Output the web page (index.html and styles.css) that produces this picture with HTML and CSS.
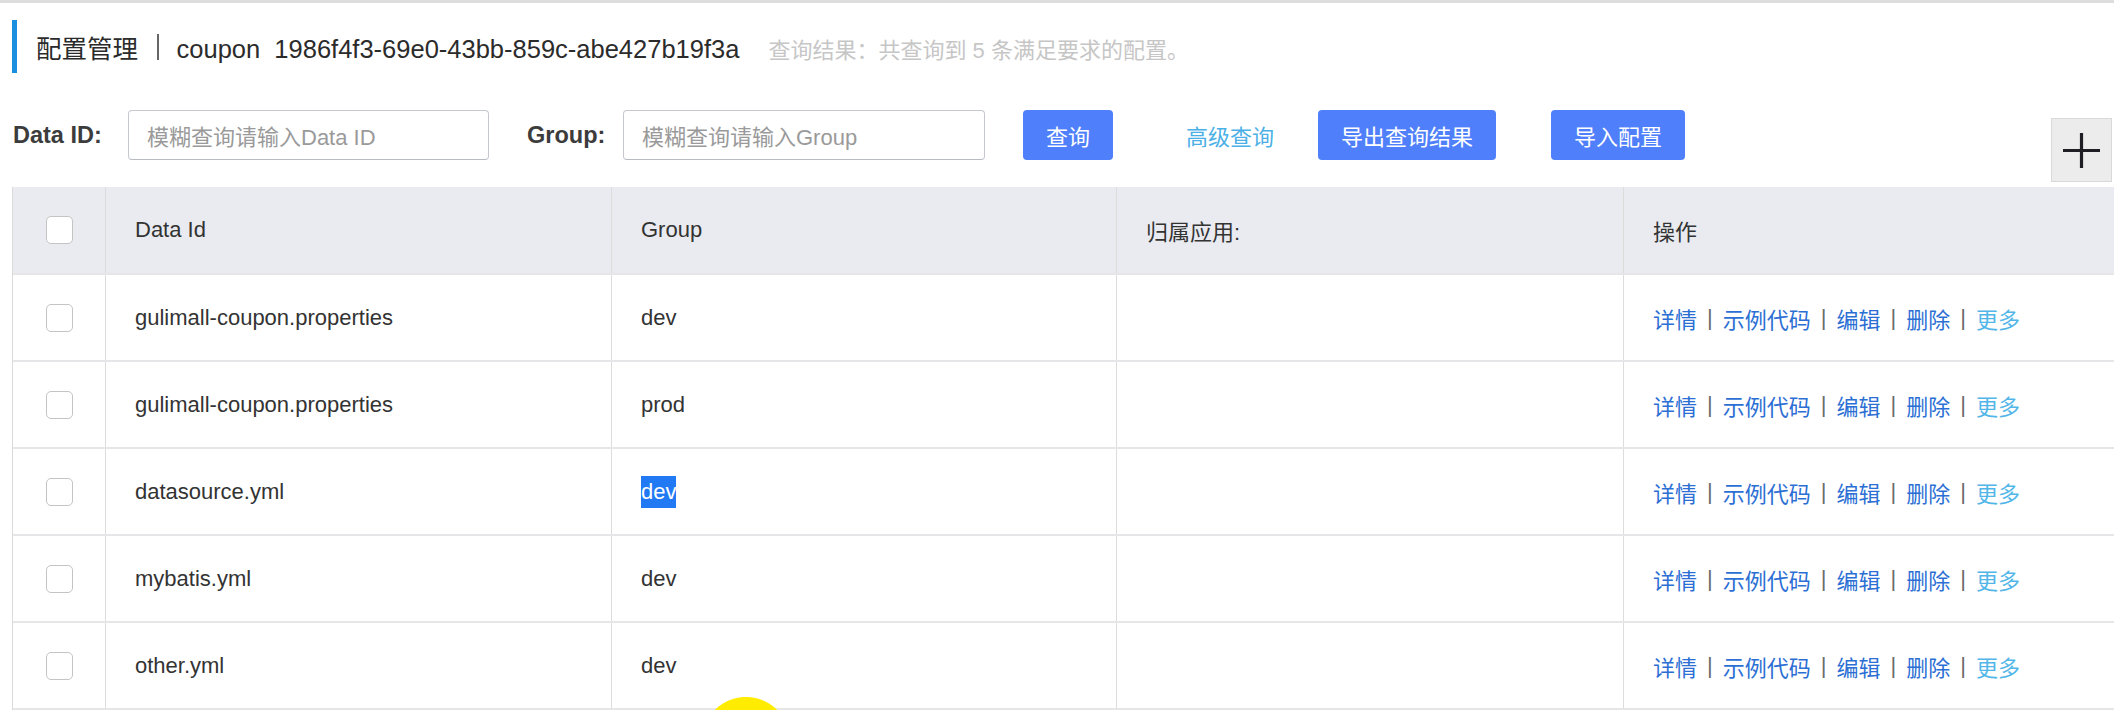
FILE: index.html
```html
<!DOCTYPE html>
<html lang="zh-CN">
<head>
<meta charset="utf-8">
<title>配置管理</title>
<link rel="stylesheet" href="styles.css">
</head>
<body>
<div class="topline"></div>
<div class="page">
  <div class="title">
    <div class="title-text">
      <span class="t-main">配置管理</span>
      <span class="t-pipe"></span>
      <span class="t-ns">coupon&nbsp; 1986f4f3-69e0-43bb-859c-abe427b19f3a</span>
      <span class="t-result">查询结果：共查询到 5 条满足要求的配置。</span>
    </div>
  </div>

  <div class="filter">
    <label class="lbl lbl-id">Data ID:</label>
    <div class="inp"><span class="ph">模糊查询请输入Data ID</span></div>
    <label class="lbl lbl-group">Group:</label>
    <div class="inp inp-group"><span class="ph">模糊查询请输入Group</span></div>
    <button class="btn btn-query">查询</button>
    <a class="adv">高级查询</a>
    <button class="btn btn-export">导出查询结果</button>
    <button class="btn btn-import">导入配置</button>
    <button class="plus" aria-label="add">
      <svg width="39" height="37" viewBox="0 0 39 37"><path d="M1 18.5H38M19.5 1V36" stroke="#1e1e24" stroke-width="3.2" fill="none"/></svg>
    </button>
  </div>

  <div class="table">
    <div class="row head">
      <div class="cell chk"><span class="box"></span></div>
      <div class="cell">Data Id</div>
      <div class="cell">Group</div>
      <div class="cell">归属应用:</div>
      <div class="cell">操作</div>
    </div>
    <div class="row">
      <div class="cell chk"><span class="box"></span></div>
      <div class="cell">gulimall-coupon.properties</div>
      <div class="cell">dev</div>
      <div class="cell"></div>
      <div class="cell ops"><a class="op">详情</a><span class="sep">|</span><a class="op">示例代码</a><span class="sep">|</span><a class="op">编辑</a><span class="sep">|</span><a class="op">删除</a><span class="sep">|</span><a class="op more">更多</a></div>
    </div>
    <div class="row">
      <div class="cell chk"><span class="box"></span></div>
      <div class="cell">gulimall-coupon.properties</div>
      <div class="cell">prod</div>
      <div class="cell"></div>
      <div class="cell ops"><a class="op">详情</a><span class="sep">|</span><a class="op">示例代码</a><span class="sep">|</span><a class="op">编辑</a><span class="sep">|</span><a class="op">删除</a><span class="sep">|</span><a class="op more">更多</a></div>
    </div>
    <div class="row">
      <div class="cell chk"><span class="box"></span></div>
      <div class="cell">datasource.yml</div>
      <div class="cell"><span class="sel">dev</span></div>
      <div class="cell"></div>
      <div class="cell ops"><a class="op">详情</a><span class="sep">|</span><a class="op">示例代码</a><span class="sep">|</span><a class="op">编辑</a><span class="sep">|</span><a class="op">删除</a><span class="sep">|</span><a class="op more">更多</a></div>
    </div>
    <div class="row">
      <div class="cell chk"><span class="box"></span></div>
      <div class="cell">mybatis.yml</div>
      <div class="cell">dev</div>
      <div class="cell"></div>
      <div class="cell ops"><a class="op">详情</a><span class="sep">|</span><a class="op">示例代码</a><span class="sep">|</span><a class="op">编辑</a><span class="sep">|</span><a class="op">删除</a><span class="sep">|</span><a class="op more">更多</a></div>
    </div>
    <div class="row">
      <div class="cell chk"><span class="box"></span></div>
      <div class="cell">other.yml</div>
      <div class="cell">dev</div>
      <div class="cell"></div>
      <div class="cell ops"><a class="op">详情</a><span class="sep">|</span><a class="op">示例代码</a><span class="sep">|</span><a class="op">编辑</a><span class="sep">|</span><a class="op">删除</a><span class="sep">|</span><a class="op more">更多</a></div>
    </div>
  </div>
</div>
<div class="cursor-dot"></div>
</body>
</html>
```

FILE: styles.css
```css
html, body {
  margin: 0;
  padding: 0;
}
html {
  height: 710px;
  overflow: hidden;
}
body {
  width: 2114px;
  height: 710px;
  overflow: hidden;
  position: relative;
  background: #ffffff;
  font-family: "Liberation Sans", Arial, "Noto Sans CJK SC", sans-serif;
  font-size: 22px;
  color: #333333;
}
.topline {
  height: 3px;
  background: #dedede;
}
.page {
  padding-left: 12px;
}
.title {
  margin-top: 17px;
  height: 53px;
  border-left: 5px solid #1b8fdf;
  padding-left: 19px;
  display: flex;
  align-items: center;
}
.title-text {
  display: flex;
  align-items: baseline;
}
.t-main {
  font-size: 25.5px;
  color: #2b2b2b;
}
.t-pipe {
  display: inline-block;
  width: 1.5px;
  height: 26px;
  background: #666666;
  margin: 0 18px 0 19px;
  align-self: center;
}
.t-ns {
  font-size: 25.5px;
  color: #2b2b2b;
}
.t-result {
  font-size: 22px;
  color: #c6c6c6;
  margin-left: 29px;
}

.filter {
  margin-top: 37px;
  height: 50px;
  display: flex;
  align-items: center;
  padding-left: 1px;
  padding-right: 2px;
}
.lbl {
  font-weight: bold;
  font-size: 23.5px;
  color: #3c3c3c;
}
.lbl-id { width: 115px; }
.lbl-group { width: 96px; }
.inp {
  box-sizing: border-box;
  width: 361px;
  height: 50px;
  border: 1px solid #c6c8cf;
  border-bottom-color: #b9bbc2;
  border-radius: 4px;
  display: flex;
  align-items: center;
  padding-left: 18px;
  margin-right: 38px;
}
.inp-group { width: 362px; }
.ph {
  color: #9a9a9a;
  font-size: 22px;
}
.btn {
  box-sizing: border-box;
  height: 50px;
  border: none;
  border-radius: 4px;
  background: #4f7ffa;
  color: #ffffff;
  font-family: inherit;
  font-size: 22px;
  padding: 0 23px;
}
.btn-query { width: 90px; padding: 0; margin-right: 73px; }
.adv {
  color: #4cb0e6;
  font-size: 22px;
  margin-right: 44px;
}
.btn-export { width: 178px; margin-right: 55px; }
.btn-import { width: 134px; }
.plus {
  margin-left: auto;
  align-self: flex-start;
  margin-top: 8px;
  box-sizing: border-box;
  width: 61px;
  height: 64px;
  background: #ececec;
  border: 1px solid #d9d9d9;
  padding: 0;
  display: flex;
  align-items: center;
  justify-content: center;
}

.table {
  margin-top: 27px;
  width: 2110px;
  border-left: 1px solid #dadada;
}
.row {
  display: grid;
  grid-template-columns: 92px 506px 505px 507px 1fr;
  height: 87px;
  box-sizing: border-box;
  border-bottom: 2px solid #e6e6e8;
}
.row.head {
  height: 88px;
  background: #e9ebf0;
}
.cell {
  display: flex;
  align-items: center;
  padding-left: 29px;
  border-left: 1px solid #dcdcdc;
  color: #333333;
  white-space: nowrap;
}
.cell.chk {
  border-left: none;
  padding-left: 0;
  justify-content: center;
}
.box {
  box-sizing: border-box;
  width: 27px;
  height: 28px;
  border: 1px solid #c4c4c4;
  border-radius: 5px;
  background: #ffffff;
}
.sel {
  background: #2179f3;
  color: #ffffff;
  padding: 3px 0;
}
.ops {
  font-size: 22px;
}
.op {
  color: #2c6fd4;
}
.op.more {
  color: #52b6e8;
}
.sep {
  color: #6b6b6b;
  margin: 0 10px;
}

.cursor-dot {
  position: absolute;
  left: 702px;
  top: 697px;
  width: 88px;
  height: 13px;
  background: radial-gradient(circle at 50% 44px, #ffec00 0, #ffec00 43.5px, rgba(255, 236, 0, 0) 44.5px);
}
```
